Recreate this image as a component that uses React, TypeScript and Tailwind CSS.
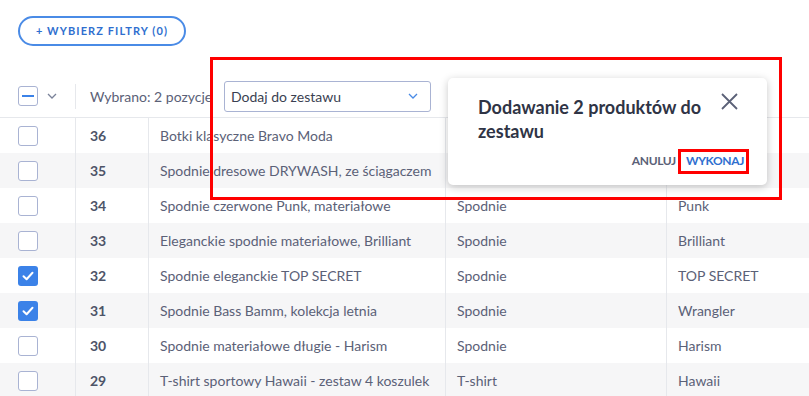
import React from "react";

const rows = [
  { id: 36, name: "Botki klasyczne Bravo Moda", cat: "", brand: "", checked: false },
  { id: 35, name: "Spodnie dresowe DRYWASH, ze ściągaczem", cat: "", brand: "", checked: false },
  { id: 34, name: "Spodnie czerwone Punk, materiałowe", cat: "Spodnie", brand: "Punk", checked: false },
  { id: 33, name: "Eleganckie spodnie materiałowe, Brilliant", cat: "Spodnie", brand: "Brilliant", checked: false },
  { id: 32, name: "Spodnie eleganckie TOP SECRET", cat: "Spodnie", brand: "TOP SECRET", checked: true },
  { id: 31, name: "Spodnie Bass Bamm, kolekcja letnia", cat: "Spodnie", brand: "Wrangler", checked: true },
  { id: 30, name: "Spodnie materiałowe długie - Harism", cat: "Spodnie", brand: "Harism", checked: false },
  { id: 29, name: "T-shirt sportowy Hawaii - zestaw 4 koszulek", cat: "T-shirt", brand: "Hawaii", checked: false },
];

function Check({ checked }: { checked: boolean }) {
  if (checked)
    return (
      <div className="w-5 h-5 rounded-[3px] bg-[#3b82e8] flex items-center justify-center">
        <svg width="12" height="10" viewBox="0 0 12 10">
          <path d="M1.5 5.2 L4.6 8.2 L10.5 1.8" fill="none" stroke="white" strokeWidth="2" strokeLinecap="round" strokeLinejoin="round" />
        </svg>
      </div>
    );
  return <div className="w-5 h-5 rounded-[3px] border border-[#a9b3d3] bg-white" />;
}

export default function App() {
  return (
    <div className="relative w-[809px] h-[396px] overflow-hidden bg-white text-[#5b6177]" style={{ fontFamily: "Lato, 'Noto Sans', sans-serif" }}>
      <div className="pt-4 pl-[18px] h-[75px]">
        <button className="h-[30px] w-[168px] rounded-full border-2 border-[#4a8be6] text-[#2f6fcf] text-[11px] font-bold tracking-[0.1em]">
          + WYBIERZ FILTRY (0)
        </button>
      </div>
      <div className="flex items-center h-[43px] border-b border-[#e6e8ec]">
        <div className="w-[76px] flex items-center pl-[18px] gap-[9px]">
          <div className="w-5 h-5 rounded-[3px] border border-[#a9b3d3] flex items-center justify-center">
            <div className="w-[12px] h-[2px] bg-[#3b82e8]" />
          </div>
          <svg width="10" height="6" viewBox="0 0 10 6">
            <path d="M1 1 L5 5 L9 1" fill="none" stroke="#7a8299" strokeWidth="1.3" />
          </svg>
        </div>
        <div className="w-px h-[25px] bg-[#e6e8ec] -ml-px" />
        <div className="pl-[14px] w-[148px] text-[14px] whitespace-nowrap overflow-hidden">Wybrano: 2 pozycje</div>
        <div className="w-[207px] h-[31px] border border-[#a9b3d3] rounded-[3px] flex items-center justify-between pl-[6px] pr-[12px] text-[14px] text-[#3a3f52]">
          <span>Dodaj do zestawu</span>
          <svg width="10" height="6" viewBox="0 0 10 6">
            <path d="M1 1 L5 5 L9 1" fill="none" stroke="#4a8be6" strokeWidth="1.3" />
          </svg>
        </div>
      </div>
      <div>
        {rows.map((r, i) => (
          <div key={r.id} className={`flex h-[35px] items-center text-[14px] ${i % 2 === 1 ? "bg-[#f6f6f7]" : "bg-white"}`}>
            <div className="w-[76px] h-full border-r border-[#e6e8ec] flex items-center pl-[18px]">
              <Check checked={r.checked} />
            </div>
            <div className="w-[73px] h-full border-r border-[#e6e8ec] flex items-center pl-[14px] font-bold text-[#4d5468]">{r.id}</div>
            <div className="w-[297px] h-full border-r border-[#e6e8ec] flex items-center pl-[11px] whitespace-nowrap">{r.name}</div>
            <div className="w-[221px] h-full border-r border-[#e6e8ec] flex items-center pl-[11px]">{r.cat}</div>
            <div className="flex-1 h-full flex items-center pl-[11px]">{r.brand}</div>
          </div>
        ))}
      </div>

      <div className="absolute left-[448px] top-[78px] w-[319px] h-[107px] bg-white rounded-[5px] shadow-[0_2px_8px_rgba(0,0,0,0.22)]">
        <div className="absolute left-[30px] top-[17px] w-[232px] text-[18px] font-bold leading-[24px] text-[#2f3445]">
          Dodawanie 2 produktów do zestawu
        </div>
        <svg className="absolute left-[273px] top-[15px]" width="17" height="17" viewBox="0 0 17 17">
          <path d="M1 1 L16 16 M16 1 L1 16" stroke="#5b6177" strokeWidth="1.8" />
        </svg>
        <div className="absolute right-[23px] top-[75px] flex gap-[10px] text-[12px] font-bold leading-[16px] tracking-[-0.03em]">
          <span className="text-[#5b6177]">ANULUJ</span>
          <span className="text-[#2f6fcf]">WYKONAJ</span>
        </div>
      </div>

      <div className="absolute left-[210px] top-[57px] w-[572px] h-[143px] border-[3px] border-[#ff0000]" />
      <div className="absolute left-[678px] top-[149px] w-[71px] h-[25px] border-[3px] border-[#ff0000]" />
    </div>
  );
}
